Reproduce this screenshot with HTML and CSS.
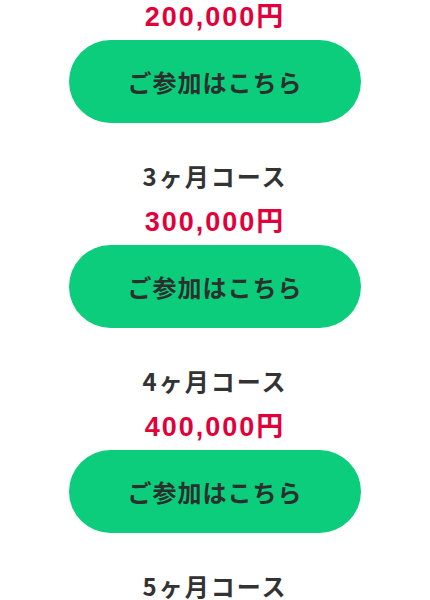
FILE: index.html
```html
<!DOCTYPE html>
<html lang="ja">
<head>
  <meta charset="UTF-8">
  <meta name="viewport" content="width=device-width, initial-scale=1.0">
  <title>コース一覧</title>
  <link rel="stylesheet" href="styles.css">
</head>
<body>
  <div class="course-list">
    <div class="course">
      <p class="course-price">200,000円</p>
      <a class="join-btn" href="#">ご参加はこちら</a>
    </div>
    <div class="course">
      <h3 class="course-title">3ヶ月コース</h3>
      <p class="course-price">300,000円</p>
      <a class="join-btn" href="#">ご参加はこちら</a>
    </div>
    <div class="course">
      <h3 class="course-title">4ヶ月コース</h3>
      <p class="course-price">400,000円</p>
      <a class="join-btn" href="#">ご参加はこちら</a>
    </div>
    <div class="course">
      <h3 class="course-title">5ヶ月コース</h3>
    </div>
  </div>
</body>
</html>
```

FILE: styles.css
```css
* {
  margin: 0;
  padding: 0;
  box-sizing: border-box;
}

body {
  background: #fff;
  font-family: "Noto Sans CJK JP", "Noto Sans", sans-serif;
  overflow: hidden;
}

.course-list {
  display: flex;
  flex-direction: column;
  align-items: center;
}

.course {
  display: flex;
  flex-direction: column;
  align-items: center;
  width: 100%;
  padding-bottom: 36px;
}

.course-title {
  font-size: 24px;
  font-weight: 700;
  line-height: 34px;
  letter-spacing: 2px;
  color: #333;
  margin-bottom: 12px;
}

/* latin digits from Liberation, the yen sign from the CJK font */
.course-price {
  font-family: "Liberation Sans", "Noto Sans CJK JP", sans-serif;
  font-size: 27px;
  font-weight: 700;
  line-height: 34px;
  letter-spacing: 2px;
  color: #e2003b;
  margin-bottom: 6px;
}

.join-btn {
  display: flex;
  justify-content: center;
  align-items: center;
  width: 292px;
  height: 83px;
  border-radius: 42px;
  background: #0ccd7b;
  color: #2b2f2d;
  font-size: 24px;
  font-weight: 700;
  letter-spacing: 1px;
  text-decoration: none;
}
```
